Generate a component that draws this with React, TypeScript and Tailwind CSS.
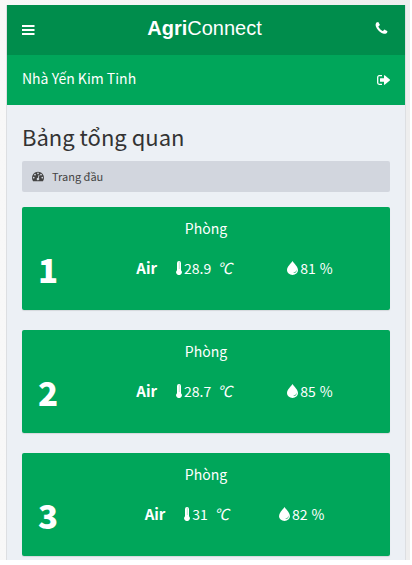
import type { ReactNode } from "react";

type Room = { id: number; temperature: string; humidity: number };

const rooms: Room[] = [
  { id: 1, temperature: "28.9", humidity: 81 },
  { id: 2, temperature: "28.7", humidity: 85 },
  { id: 3, temperature: "31", humidity: 82 },
];

function Glyph({ className, children }: { className: string; children: ReactNode }) {
  return (
    <svg viewBox="0 0 1792 1792" fill="currentColor" aria-hidden="true" className={className}>
      {children}
    </svg>
  );
}

function BarsIcon() {
  return (
    <svg viewBox="0 0 13 10" fill="currentColor" aria-hidden="true" className="h-2.5 w-[13px]">
      <path d="M0 0h12.5v2h-12.5zM0 4h12.5v2h-12.5zM0 8h12.5v2h-12.5z" />
    </svg>
  );
}

function PhoneIcon() {
  return (
    <Glyph className="size-[15px]">
      <path d="M1600 1240q0 27-10 70.5t-21 68.5q-21 50-122 106-94 51-186 51-27 0-52.5-3.5t-57.5-12.5-47.5-14.5-55.5-20.5-49-18q-98-35-175-83-128-79-264.5-215.5t-215.5-264.5q-48-77-83-175-3-9-18-49t-20.5-55.5-14.5-47.5-12.5-57.5-3.5-52.5q0-92 51-186 56-101 106-122 25-11 68.5-21t70.5-10q14 0 21 3 18 6 53 76 11 19 30 54t35 63.5 31 53.5q3 4 17.5 25t21.5 35.5 7 28.5q0 20-28.5 50t-62 55-62 53-28.5 46q0 9 5 22.5t8.5 20.5 14 24 11.5 19q76 137 174 235t235 174q2 1 19 11.5t24 14 20.5 8.5 22.5 5q18 0 46-28.5t53-62 55-62 50-28.5q14 0 28.5 7t35.5 21.5 25 17.5q25 15 53.5 31t63.5 35 54 30q70 35 76 53 3 7 3 21z" />
    </Glyph>
  );
}

function SignOutIcon() {
  return (
    <svg viewBox="0 0 13 10" fill="currentColor" aria-hidden="true" className="h-2.5 w-[13px]">
      <path d="M5 0.7H2.2A1.5 1.5 0 0 0 0.7 2.2v5.6a1.5 1.5 0 0 0 1.5 1.5H5" fill="none" stroke="currentColor" strokeWidth="1.3" />
      <path d="M3.4 3.2H7V0.6a0.4 0.4 0 0 1 0.7-0.3L12.8 4.6a0.5 0.5 0 0 1 0 0.8L7.7 9.7A0.4 0.4 0 0 1 7 9.4V6.8H3.4a0.4 0.4 0 0 1-0.4-0.4V3.6a0.4 0.4 0 0 1 0.4-0.4z" />
    </svg>
  );
}

function DashboardIcon() {
  return (
    <Glyph className="size-3">
      <path d="M384 1152q0-53-37.5-90.5t-90.5-37.5-90.5 37.5-37.5 90.5 37.5 90.5 90.5 37.5 90.5-37.5 37.5-90.5zm192-448q0-53-37.5-90.5t-90.5-37.5-90.5 37.5-37.5 90.5 37.5 90.5 90.5 37.5 90.5-37.5 37.5-90.5zm428 481l101-382q6-26-7.5-48.5t-38.5-29.5-48 6.5-30 39.5l-101 382q-60 5-107 43.5t-63 98.5q-20 77 20 146t117 89 146-20 89-117q16-60-6-117t-72-91zm660-33q0-53-37.5-90.5t-90.5-37.5-90.5 37.5-37.5 90.5 37.5 90.5 90.5 37.5 90.5-37.5 37.5-90.5zm-640-640q0-53-37.5-90.5t-90.5-37.5-90.5 37.5-37.5 90.5 37.5 90.5 90.5 37.5 90.5-37.5 37.5-90.5zm448 192q0-53-37.5-90.5t-90.5-37.5-90.5 37.5-37.5 90.5 37.5 90.5 90.5 37.5 90.5-37.5 37.5-90.5zm320 448q0 261-141 483-19 29-54 29h-1402q-35 0-54-29-141-221-141-483 0-182 71-348t191-286 286-191 348-71 348 71 286 191 191 286 71 348z" />
    </Glyph>
  );
}

function ThermometerIcon() {
  return (
    <svg viewBox="0 0 6 14" fill="currentColor" aria-hidden="true" className="mr-0.5 h-3.5 w-1.5">
      <path d="M3 0a2 2 0 0 1 2 2v7.2a2.8 2.8 0 1 1-4 0V2a2 2 0 0 1 2-2z" />
      <path d="M3.3 1.5v6.5" stroke="#00a65a" strokeWidth="0.9" strokeDasharray="1 1" opacity="0.6" />
    </svg>
  );
}

function DropIcon() {
  return (
    <svg viewBox="0 0 11 14" fill="currentColor" aria-hidden="true" className="mr-0.5 h-3.5 w-[11px]">
      <path
        fillRule="evenodd"
        d="M5.5 0C7 2.4 11 5.6 11 9.2a5.5 4.8 0 0 1-11 0C0 5.6 4 2.4 5.5 0zM9.4 8.6c0 1.8-1.2 2.8-3.2 3.4 2.4 0.3 3.8-1.2 3.2-3.4z"
      />
    </svg>
  );
}

function RoomCard({ room }: { room: Room }) {
  const hasDecimals = room.temperature.includes(".");
  return (
    <article className="h-[103px] rounded-[2px] bg-[#00a65a] pt-[11px] text-white shadow-[0_1px_1px_rgba(0,0,0,0.1)]">
      <h2 className="text-center text-[14px] leading-5">Phòng</h2>
      <div className="mt-1 flex items-start">
        <span className="w-[57px] pl-4 text-[33px] leading-[54px] font-black">{room.id}</span>
        <div className="flex h-[52px] flex-1 items-center justify-center text-[14px] leading-5">
          <strong className="mr-[19px] text-[15px] font-bold">Air</strong>
          <span className={hasDecimals ? "mr-[55px] flex items-center" : "mr-[50px] flex items-center"}>
            <ThermometerIcon />
            {room.temperature}
            <i className="ml-1.5 text-[15px]">℃</i>
          </span>
          <span className="flex items-center">
            <DropIcon />
            {room.humidity}
            <span className="ml-1">%</span>
          </span>
        </div>
      </div>
    </article>
  );
}

export default function App() {
  return (
    <div className="bg-white pb-[5px] font-['Noto_Sans_CJK_SC','Noto_Sans',sans-serif]">
      <div className="mr-0.5 bg-linear-to-r from-[#f8f8f8] to-[#eeeeee] pt-[5px] pr-1 pl-1.5">
        <div className="border-x border-[#dddfe2] bg-[#ecf0f5]">
          <header className="text-white">
            <div className="flex h-[50px] items-center justify-between bg-[#008d4c] px-[15px] pb-1">
              <button type="button" aria-label="Menu" className="pt-1">
                <BarsIcon />
              </button>
              <a href="#" className="pb-px font-['Liberation_Sans',Arial,sans-serif] text-xl">
                <b>Agri</b>Connect
              </a>
              <a href="#" aria-label="Phone" className="pr-px">
                <PhoneIcon />
              </a>
            </div>
            <div className="flex h-[50px] items-center justify-between bg-[#00a65a] px-[15px] pb-1">
              <span className="text-[14px] leading-5">Nhà Yến Kim Tinh</span>
              <a href="#" aria-label="Sign out" className="pt-1">
                <SignOutIcon />
              </a>
            </div>
          </header>
          <main className="px-[15px] pt-[13px] pb-1">
            <h1 className="text-[22px] leading-9 text-[#333333]">Bảng tổng quan</h1>
            <nav className="mt-[7px] flex h-[31px] items-center rounded-[2px] bg-[#d2d6de] px-2.5 text-[#444444]">
              <a href="#" className="flex items-center gap-2 pb-px text-[11px] leading-4">
                <DashboardIcon />
                Trang đầu
              </a>
            </nav>
            <div className="mt-[15px] flex flex-col gap-5">
              {rooms.map((room) => (
                <RoomCard key={room.id} room={room} />
              ))}
            </div>
          </main>
        </div>
      </div>
    </div>
  );
}
